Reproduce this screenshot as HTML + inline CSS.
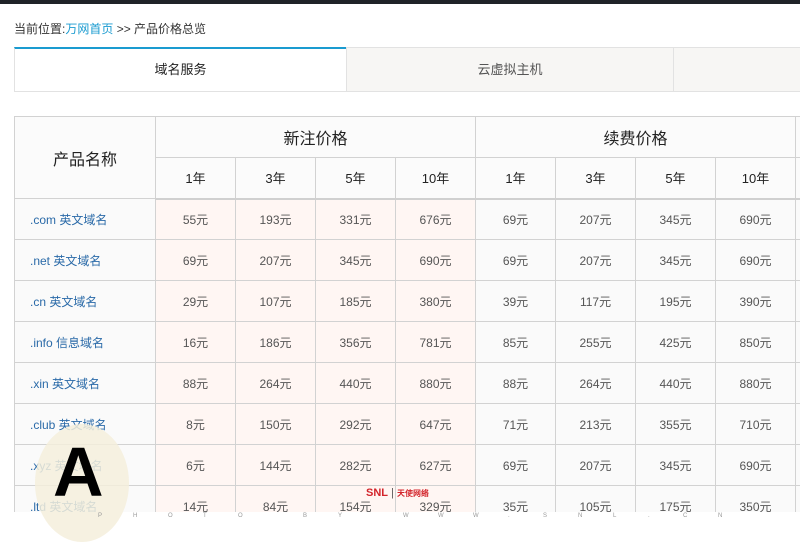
<!DOCTYPE html>
<html><head><meta charset="utf-8"><style>
*{margin:0;padding:0;box-sizing:border-box}
body{width:800px;height:533px;background:#fff;font-family:"Liberation Sans","Noto Sans CJK SC",sans-serif;position:relative;overflow:hidden;color:#333}
.top{position:absolute;left:0;top:0;width:800px;height:4px;background:#1f2328}
.bc{position:absolute;left:14px;top:20px;font-size:12px;color:#333}
.bc a{color:#1a9bd0;text-decoration:none}
.tab{position:absolute;top:47px;height:45px;border:1px solid #e2e2e2;background:#f7f6f4;font-size:13px;color:#555;text-align:center;line-height:43px}
.tab.on{background:#fff;border-top:2px solid #1a9bd0;color:#222;line-height:41px}
.wrap{position:absolute;left:14px;top:116px;width:786px;height:396px;overflow:hidden}
table{border-collapse:collapse;table-layout:fixed;width:861px}
td{border:1px solid #d2d2d2;height:41px;text-align:center;font-size:12px;color:#555;background:#fafafa;padding:0}
tr.h td{background:#fbfbfb;color:#222;font-size:13px}
tr.h td.big{font-size:16px}
tr.h2 td{border-bottom:2px solid #d0d0d0}
td.n{text-align:left;padding-left:15px;color:#2a6aa8}
td.p{background:#fff6f3}
.wm{position:absolute;top:513px;left:0;width:800px;font-size:6px;color:#999;letter-spacing:0}
.circ{position:absolute;left:35px;top:424px;width:94px;height:118px;border-radius:50%;background:rgba(245,238,220,.85)}
.A{position:absolute;left:53px;top:432px;font-size:70px;font-weight:bold;color:#000;font-family:"Liberation Sans",sans-serif;line-height:80px}
.snl{position:absolute;left:366px;top:487px;font-size:11px;font-weight:bold;color:#d3242b}
</style></head><body>
<div class="top"></div>
<div class="bc">当前位置:<a>万网首页</a> &gt;&gt; 产品价格总览</div>
<div class="tab on" style="left:14px;width:333px">域名服务</div>
<div class="tab" style="left:346px;width:328px">云虚拟主机</div>
<div class="tab" style="left:673px;width:140px"></div>
<div class="wrap"><table>
<colgroup><col style="width:141px"><col style="width:80px"><col style="width:80px"><col style="width:80px"><col style="width:80px"><col style="width:80px"><col style="width:80px"><col style="width:80px"><col style="width:80px"><col style="width:80px"></colgroup>
<tr class="h"><td rowspan="2" class="big">产品名称</td><td colspan="4" class="big">新注价格</td><td colspan="4" class="big">续费价格</td><td></td></tr>
<tr class="h h2"><td>1年</td><td>3年</td><td>5年</td><td>10年</td><td>1年</td><td>3年</td><td>5年</td><td>10年</td><td></td></tr>
<tr><td class="n">.com 英文域名</td><td class="p">55元</td><td class="p">193元</td><td class="p">331元</td><td class="p">676元</td><td>69元</td><td>207元</td><td>345元</td><td>690元</td><td></td></tr>
<tr><td class="n">.net 英文域名</td><td class="p">69元</td><td class="p">207元</td><td class="p">345元</td><td class="p">690元</td><td>69元</td><td>207元</td><td>345元</td><td>690元</td><td></td></tr>
<tr><td class="n">.cn 英文域名</td><td class="p">29元</td><td class="p">107元</td><td class="p">185元</td><td class="p">380元</td><td>39元</td><td>117元</td><td>195元</td><td>390元</td><td></td></tr>
<tr><td class="n">.info 信息域名</td><td class="p">16元</td><td class="p">186元</td><td class="p">356元</td><td class="p">781元</td><td>85元</td><td>255元</td><td>425元</td><td>850元</td><td></td></tr>
<tr><td class="n">.xin 英文域名</td><td class="p">88元</td><td class="p">264元</td><td class="p">440元</td><td class="p">880元</td><td>88元</td><td>264元</td><td>440元</td><td>880元</td><td></td></tr>
<tr><td class="n">.club 英文域名</td><td class="p">8元</td><td class="p">150元</td><td class="p">292元</td><td class="p">647元</td><td>71元</td><td>213元</td><td>355元</td><td>710元</td><td></td></tr>
<tr><td class="n">.xyz 英文域名</td><td class="p">6元</td><td class="p">144元</td><td class="p">282元</td><td class="p">627元</td><td>69元</td><td>207元</td><td>345元</td><td>690元</td><td></td></tr>
<tr><td class="n">.ltd 英文域名</td><td class="p">14元</td><td class="p">84元</td><td class="p">154元</td><td class="p">329元</td><td>35元</td><td>105元</td><td>175元</td><td>350元</td><td></td></tr>
</table></div>
<div class="circ"></div>
<div class="A">A</div>
<div class="snl">SNL<span style="font-weight:normal;color:#555"> | </span><span style="font-size:8px">天使网络</span></div>
<div class="wm"><span style="position:absolute;left:98px">P</span><span style="position:absolute;left:133px">H</span><span style="position:absolute;left:168px">O</span><span style="position:absolute;left:203px">T</span><span style="position:absolute;left:238px">O</span><span style="position:absolute;left:303px">B</span><span style="position:absolute;left:338px">Y</span><span style="position:absolute;left:403px">W</span><span style="position:absolute;left:438px">W</span><span style="position:absolute;left:473px">W</span><span style="position:absolute;left:508px">.</span><span style="position:absolute;left:543px">S</span><span style="position:absolute;left:578px">N</span><span style="position:absolute;left:613px">L</span><span style="position:absolute;left:648px">.</span><span style="position:absolute;left:683px">C</span><span style="position:absolute;left:718px">N</span></div>
</body></html>
